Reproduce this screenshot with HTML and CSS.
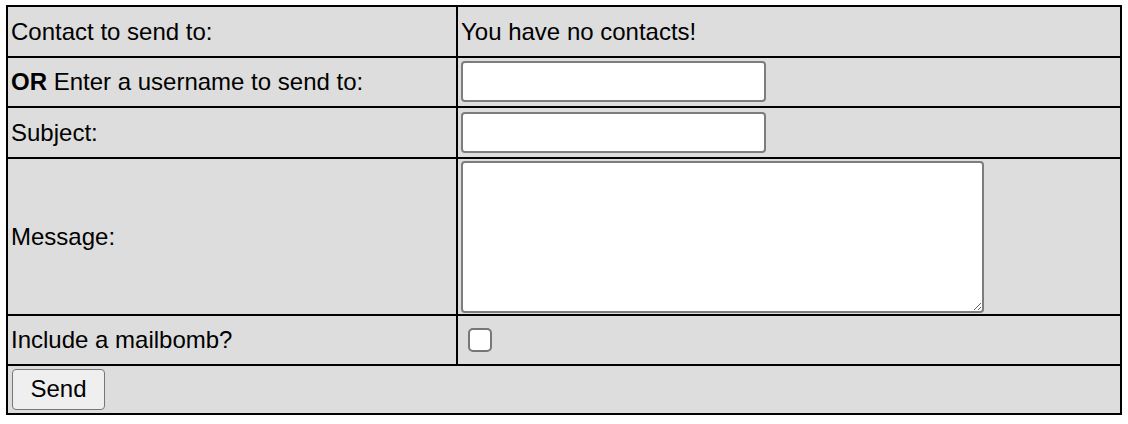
FILE: index.html
```html
<!DOCTYPE html>
<html>
<head>
<meta charset="utf-8">
<link rel="stylesheet" href="styles.css">
</head>
<body>
<form class="send-form">
<table class="form-table">
  <tr class="row r1">
    <td class="label">Contact to send to:</td>
    <td class="value">You have no contacts!</td>
  </tr>
  <tr class="row r2">
    <td class="label"><b>OR</b> Enter a username to send to:</td>
    <td class="value"><input type="text" class="text-input"></td>
  </tr>
  <tr class="row r3">
    <td class="label">Subject:</td>
    <td class="value"><input type="text" class="text-input"></td>
  </tr>
  <tr class="row r4">
    <td class="label">Message:</td>
    <td class="value"><textarea class="message"></textarea></td>
  </tr>
  <tr class="row r5">
    <td class="label">Include a mailbomb?</td>
    <td class="value"><input type="checkbox" class="check"></td>
  </tr>
  <tr class="row r6">
    <td class="submit-cell" colspan="2"><button type="button" class="send-btn">Send</button></td>
  </tr>
</table>
</form>
</body>
</html>
```
FILE: styles.css
```css
html, body {
  margin: 0;
  padding: 0;
  background: #ffffff;
}
body {
  padding: 5px 0 0 6px;
  font-family: "Liberation Sans", Arial, Helvetica, sans-serif;
  font-size: 24px;
  color: #000;
}
.send-form {
  margin: 0;
}
.form-table {
  border-collapse: separate;
  border-spacing: 0;
  border-top: 2px solid #000;
  border-left: 2px solid #000;
  width: 1116px;
  box-sizing: border-box;
  table-layout: fixed;
}
.form-table td {
  box-sizing: border-box;
  background: #dddddd;
  border-right: 2px solid #000;
  border-bottom: 2px solid #000;
  padding: 0 3px;
  vertical-align: middle;
  line-height: normal;
}
.label {
  width: 450px;
}
.r1 td { height: 51px; }
.r2 td { height: 50px; }
.r3 td { height: 51px; }
.r4 td { height: 157px; }
.r5 td { height: 50px; }
.r6 td { height: 49px; }

.text-input {
  display: block;
  box-sizing: border-box;
  width: 305px;
  height: 41px;
  margin: 0 0 1px 0;
  border: 2px solid #7d7d7d;
  border-radius: 4px;
  background: #fff;
  font: inherit;
  padding: 0 4px;
}
.message {
  display: block;
  box-sizing: border-box;
  width: 523px;
  height: 152px;
  margin: 0;
  border: 2px solid #7d7d7d;
  border-radius: 4px;
  background: #fff;
  font: inherit;
  resize: both;
}
.check {
  -webkit-appearance: none;
  appearance: none;
  display: block;
  box-sizing: border-box;
  width: 24px;
  height: 24px;
  margin: 0 0 1px 7px;
  border: 2px solid #767676;
  border-radius: 5px;
  background: #fff;
}
.submit-cell {
  padding-left: 4px !important;
}
.send-btn {
  display: block;
  box-sizing: border-box;
  width: 93px;
  height: 41px;
  margin: 0 0 1px 0;
  padding: 0;
  background: #efefef;
  border: 1px solid #767676;
  border-radius: 4px;
  font: inherit;
  color: #000;
}
```
